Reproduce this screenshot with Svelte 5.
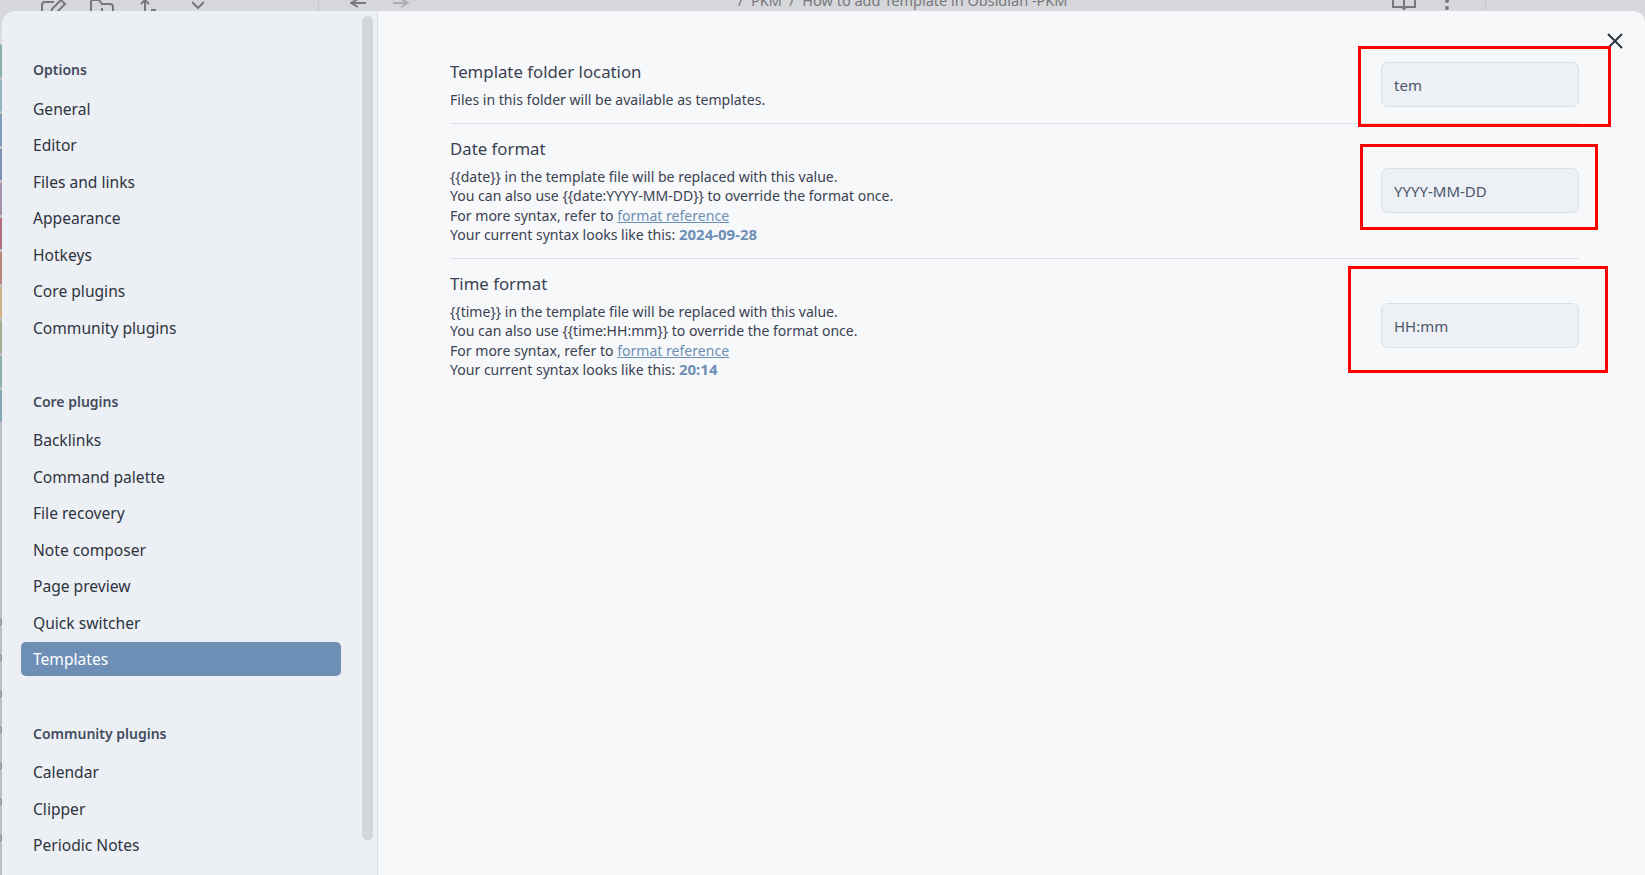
<script>
  const groups = [
    { title: 'Options', items: ['General', 'Editor', 'Files and links', 'Appearance', 'Hotkeys', 'Core plugins', 'Community plugins'] },
    { title: 'Core plugins', items: ['Backlinks', 'Command palette', 'File recovery', 'Note composer', 'Page preview', 'Quick switcher', 'Templates'] },
    { title: 'Community plugins', items: ['Calendar', 'Clipper', 'Periodic Notes', 'Shortcuts extender'] }
  ];
  const active = 'Templates';

  const stripes = ['#8fb0aa', '#8fb5be', '#7f9bbb', '#8091b3', '#a992a9', '#b06d7e', '#bb8478', '#cfb283', '#a0b08f', '#8fb0aa', '#85a8b5'];
  const marks = [0, 1, 2, 3, 4, 5, 6];
</script>

<div class="window">
  <div class="strip">
    {#each stripes as color}
      <div class="stripe" style="background: {color}"></div>
    {/each}
    <div class="marks">
      {#each marks as m}
        <div class="mark"></div>
      {/each}
    </div>
  </div>

  <div class="topbar">
    <div class="tools">
      <svg class="tool" width="26" height="26" viewBox="0 0 26 26"><path d="M22 12v9a3 3 0 0 1-3 3H4a3 3 0 0 1-3-3V6a3 3 0 0 1 3-3h9M10 14l1-4L20 1l4 4-9 9z" /></svg>
      <svg class="tool" width="24" height="26" viewBox="0 0 24 26"><path d="M4 24a3 3 0 0 1-3-3V3a2 2 0 0 1 2-2h6l3 4h8a3 3 0 0 1 3 3v13a3 3 0 0 1-3 3zM12 9v8M8 13h8" /></svg>
      <svg class="tool" width="16" height="24" viewBox="0 0 16 24"><path d="M5 18V1M1 5l4-4 4 4M11 11h5" /></svg>
      <svg class="tool" width="12" height="8" viewBox="0 0 12 8"><path d="M0 1l6 6 6-6" /></svg>
    </div>
    <div class="nav-arrows">
      <svg class="tool" width="16" height="10" viewBox="0 0 16 10"><path d="M8 0L1 4l7 4M1 4h15" /></svg>
      <svg class="tool faint" width="16" height="10" viewBox="0 0 16 10"><path d="M8 0l7 4-7 4M15 4H0" /></svg>
    </div>
    <div class="crumbs">/&nbsp; PKM &nbsp;/&nbsp; How to add Template in Obsidian -PKM</div>
    <div class="view-actions">
      <svg class="tool" width="24" height="12" viewBox="0 0 24 12"><path d="M1 0v7h9l2 2 2-2h9V0M12 0v9" /></svg>
      <svg class="dots" width="6" height="12" viewBox="0 0 6 12"><circle cx="3" cy="1" r="2" /><circle cx="3" cy="8" r="2" /></svg>
    </div>
  </div>

  <div class="modal">
    <aside class="sidebar">
      {#each groups as group}
        <section class="group">
          <h3>{group.title}</h3>
          <div class="items">
            {#each group.items as item}
              <div class="item" class:active={item === active}>{item}</div>
            {/each}
          </div>
        </section>
      {/each}
      <div class="scrollbar"></div>
    </aside>

    <main class="content">
      <div class="setting">
        <div class="info">
          <div class="name">Template folder location</div>
          <div class="desc">Files in this folder will be available as templates.</div>
        </div>
        <input value="tem" readonly />
      </div>

      <div class="setting">
        <div class="info">
          <div class="name">Date format</div>
          <div class="desc">
            {'{{date}}'} in the template file will be replaced with this value.<br />
            You can also use {'{{date:YYYY-MM-DD}}'} to override the format once.<br />
            For more syntax, refer to <a href="#format">format reference</a><br />
            Your current syntax looks like this: <b>2024-09-28</b>
          </div>
        </div>
        <input value="YYYY-MM-DD" readonly />
      </div>

      <div class="setting">
        <div class="info">
          <div class="name">Time format</div>
          <div class="desc">
            {'{{time}}'} in the template file will be replaced with this value.<br />
            You can also use {'{{time:HH:mm}}'} to override the format once.<br />
            For more syntax, refer to <a href="#format">format reference</a><br />
            Your current syntax looks like this: <b>20:14</b>
          </div>
        </div>
        <input value="HH:mm" readonly />
      </div>
    </main>

    <svg class="close" width="16" height="16" viewBox="0 0 16 16"><path d="M1 1l14 14M15 1L1 15" /></svg>
  </div>

  <!-- red annotation boxes drawn over the screenshot -->
  <div class="mark-box" style="left: 1358px; top: 46px; width: 253px; height: 81px"></div>
  <div class="mark-box" style="left: 1360px; top: 144px; width: 238px; height: 86px"></div>
  <div class="mark-box" style="left: 1348px; top: 266px; width: 260px; height: 107px"></div>
</div>

<style>
  :global(body) {
    margin: 0;
    overflow: hidden;
  }

  .window {
    position: relative;
    width: 1645px;
    height: 875px;
    overflow: hidden;
    background: #bfc0c4;
    font-family: "Noto Sans", "Open Sans", sans-serif;
  }

  .strip {
    position: absolute;
    left: 0;
    top: 45px;
    width: 2px;
    display: flex;
    flex-direction: column;
    gap: 3px;
  }

  .stripe {
    height: 31.5px;
  }

  .marks {
    display: flex;
    flex-direction: column;
    gap: 26px;
    margin-top: 192px;
  }

  .mark {
    width: 10px;
    height: 10px;
    margin-left: -8px;
    box-sizing: border-box;
    border: 1px solid #77787c;
    border-radius: 50%;
  }

  .topbar {
    position: absolute;
    left: 0;
    right: 0;
    top: 0;
    height: 44px;
    background: linear-gradient(#d5d6d9, #dedfe2);
    color: #77787c;
  }

  .tools {
    position: absolute;
    left: 41px;
    top: -1px;
    display: flex;
    align-items: flex-start;
  }

  .tool {
    fill: none;
    stroke: #77787c;
    stroke-width: 2;
  }

  .tool.faint {
    stroke: #aeafb3;
  }

  .tools svg:nth-child(2) {
    margin-left: 23px;
  }

  .tools svg:nth-child(3) {
    margin-left: 26px;
  }

  .tools svg:nth-child(4) {
    margin-left: 36px;
    margin-top: 2px;
  }

  .nav-arrows {
    position: absolute;
    left: 318px;
    top: -1px;
    height: 45px;
    padding-left: 31px;
    display: flex;
    gap: 27px;
    align-items: flex-start;
    border-left: 1px solid #c6c7ca;
  }

  .crumbs {
    position: absolute;
    left: 738px;
    top: -10px;
    font-size: 14.5px;
    line-height: 20px;
    white-space: nowrap;
  }

  .view-actions {
    position: absolute;
    left: 1392px;
    top: 0;
    width: 93px;
    height: 44px;
    display: flex;
    gap: 28px;
    align-items: flex-start;
    border-right: 1px solid #c6c7ca;
  }

  .dots {
    fill: #77787c;
  }

  .modal {
    position: absolute;
    left: 2px;
    top: 11px;
    right: 0;
    bottom: 0;
    display: flex;
    overflow: hidden;
    background: #f7f8fa;
    border-radius: 14px 12px 0 0;
  }

  .sidebar {
    position: relative;
    box-sizing: border-box;
    width: 376px;
    height: 100%;
    flex: none;
    padding: 49px 36px 0 19px;
    overflow: hidden;
    background: #eceff4;
    border-right: 1px solid #dbe0ea;
  }

  .scrollbar {
    position: absolute;
    left: 360px;
    top: 5px;
    width: 11px;
    height: 824px;
    border-radius: 6px;
    background: #d3d6db;
  }

  .group {
    margin-bottom: 48px;
  }

  .group:first-child {
    margin-bottom: 47.5px;
  }

  .group:first-child h3 {
    margin-bottom: 11.5px;
  }

  h3 {
    margin: 0 0 11px;
    padding-left: 12px;
    font-size: 14px;
    line-height: 20px;
    font-weight: 600;
    color: #434c5e;
  }

  .items {
    display: flex;
    flex-direction: column;
    gap: 2.5px;
  }

  .item {
    height: 34px;
    padding-left: 12px;
    border-radius: 5px;
    font-size: 15.6px;
    line-height: 34px;
    color: #2e3440;
  }

  .item.active {
    background: #6d8fb5;
    color: #fff;
  }

  .content {
    flex: 1;
    padding: 36px 66px 0 72px;
    min-width: 0;
  }

  .setting {
    display: flex;
    align-items: center;
    justify-content: space-between;
    padding: 13px 0;
    border-top: 1px solid #dbe0ea;
  }

  .setting:first-child {
    padding-bottom: 13px;
    border-top: 0;
  }

  .name {
    margin-bottom: 6px;
    font-size: 16.8px;
    line-height: 24px;
    color: #3b4252;
  }

  .desc {
    font-size: 14.05px;
    line-height: 19.5px;
    color: #3b4252;
  }

  .desc a {
    color: #6d8fb5;
  }

  .desc b {
    color: #6d8fb5;
    font-size: 15px;
    line-height: 1;
    font-weight: 700;
  }

  input {
    box-sizing: border-box;
    width: 198px;
    height: 45px;
    padding: 0 12px;
    border: 1px solid #d8dfec;
    border-radius: 7px;
    outline: none;
    background: #edf0f5;
    font: inherit;
    font-size: 15px;
    color: #4c566a;
  }

  .close {
    position: absolute;
    left: 1605px;
    top: 22px;
    fill: none;
    stroke: #2e3440;
    stroke-width: 2;
  }

  .mark-box {
    position: absolute;
    box-sizing: border-box;
    border: 3px solid #ff0000;
  }
</style>
